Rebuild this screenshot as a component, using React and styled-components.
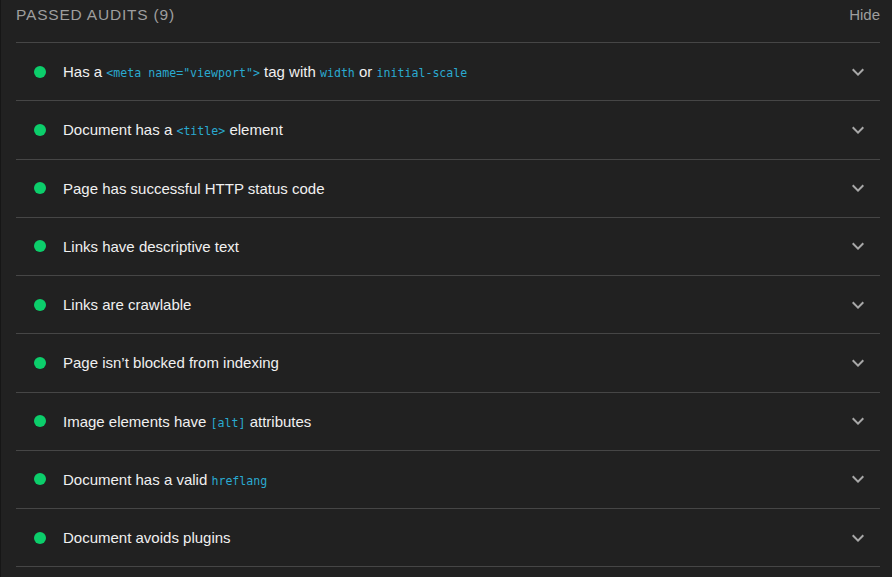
import React from 'react';
import styled, { createGlobalStyle } from 'styled-components';

const GlobalStyle = createGlobalStyle`
  html, body {
    margin: 0;
    background: #212121;
  }
  body {
    font-family: "Liberation Sans", Arial, sans-serif;
  }
`;

const Page = styled.div`
  width: 892px;
  height: 577px;
  box-sizing: border-box;
  padding: 0 12px 0 16px;
  border-left: 1px solid #161616;
  background: #212121;
  overflow: hidden;
`;

const Header = styled.div`
  display: flex;
  align-items: flex-start;
  justify-content: space-between;
  height: 43px;
  box-sizing: border-box;
  padding-top: 4px;
  margin-left: -1px;
  border-bottom: 1px solid #464646;
  color: #9e9e9e;
  font-size: 15.5px;
  line-height: 22px;
`;

const Title = styled.span`
  text-transform: uppercase;
  letter-spacing: 0.8px;
`;

const HideLink = styled.span`
  font-size: 15px;
`;

const Row = styled.div`
  display: flex;
  align-items: center;
  height: 58.25px;
  box-sizing: border-box;
  border-bottom: 1px solid #464646;
  margin-left: -1px;
  padding: 0 10px 0 18px;
`;

const Dot = styled.span`
  width: 12px;
  height: 12px;
  border-radius: 50%;
  background: #0cce6b;
  flex: none;
  margin-right: 17px;
`;

const Label = styled.div`
  flex: 1;
  color: #f0f0f0;
  font-size: 15px;
  white-space: nowrap;
`;

const Code = styled.code`
  font-family: "DejaVu Sans Mono", "Liberation Mono", monospace;
  font-size: 11.6px;
  color: #2aaad0;
`;

const Chevron = () => (
  <svg width="24" height="24" viewBox="0 0 24 24" fill="#a8a8a8">
    <path d="M16.59 8.59L12 13.17 7.41 8.59 6 10l6 6 6-6z" />
  </svg>
);

const audits = [
  ['Has a ', { c: '<meta name="viewport">' }, ' tag with ', { c: 'width' }, ' or ', { c: 'initial-scale' }],
  ['Document has a ', { c: '<title>' }, ' element'],
  ['Page has successful HTTP status code'],
  ['Links have descriptive text'],
  ['Links are crawlable'],
  ['Page isn\u2019t blocked from indexing'],
  ['Image elements have ', { c: '[alt]' }, ' attributes'],
  ['Document has a valid ', { c: 'hreflang' }],
  ['Document avoids plugins'],
];

export default function App() {
  return (
    <>
      <GlobalStyle />
      <Page>
        <Header>
          <Title>Passed audits (9)</Title>
          <HideLink>Hide</HideLink>
        </Header>
        {audits.map((parts, i) => (
          <Row key={i}>
            <Dot />
            <Label>
              {parts.map((p, j) =>
                typeof p === 'string' ? <span key={j}>{p}</span> : <Code key={j}>{p.c}</Code>
              )}
            </Label>
            <Chevron />
          </Row>
        ))}
      </Page>
    </>
  );
}
